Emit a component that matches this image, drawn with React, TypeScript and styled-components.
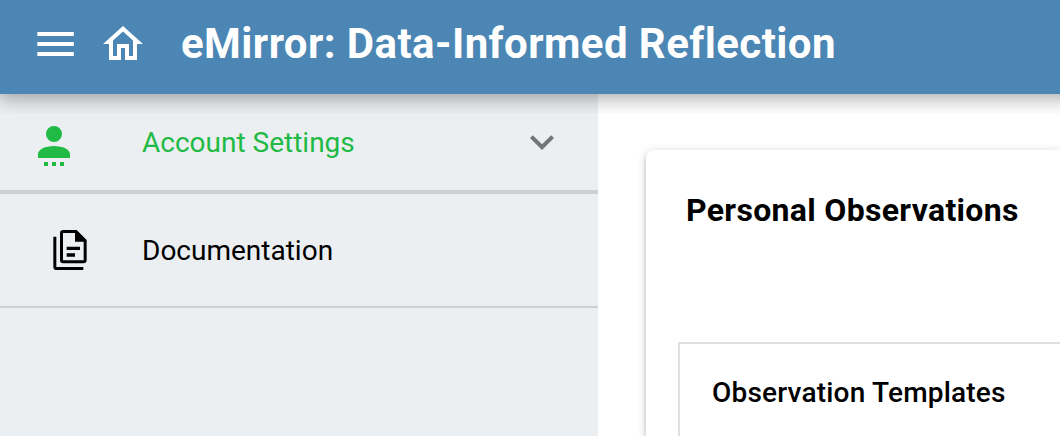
import React from "react";
import styled, { createGlobalStyle } from "styled-components";

const GlobalStyle = createGlobalStyle`
  *, *::before, *::after { box-sizing: border-box; }
  body {
    margin: 0;
    background: #fff;
    color: #000;
    font-family: Roboto, "Liberation Sans", sans-serif;
    font-size: 28px;
    line-height: 40px;
  }
  h1, h2, h3, ul { margin: 0; padding: 0; }
`;

const Page = styled.div`
  display: flex;
  flex-direction: column;
  min-height: 100vh;
  overflow-x: clip;
`;

const Header = styled.header`
  position: relative;
  z-index: 1;
  display: flex;
  align-items: center;
  margin-right: -24px;
  padding: 20px 31px 26px;
  background: #4b86b4;
  color: #fff;
  box-shadow: 0 0 20px 4px rgba(0, 0, 0, 0.2), 0 0 20px rgba(0, 0, 0, 0.24);
  clip-path: inset(0 0 -20px 0);
`;

const HeaderTools = styled.div`
  display: flex;
  gap: 20px;
`;

const IconButton = styled.button`
  display: flex;
  padding: 0;
  border: 0;
  background: none;
  color: inherit;
  cursor: pointer;
`;

const IconLink = styled.a`
  display: flex;
  color: inherit;
`;

const Icon = styled.svg<{ $width?: number; $height?: number }>`
  display: block;
  flex: none;
  width: ${({ $width = 48 }) => $width}px;
  height: ${({ $height = 48 }) => $height}px;
  fill: currentColor;
`;

const Title = styled.h1`
  margin-left: 34px;
  font-size: 42px;
  font-weight: 700;
  line-height: 48px;
  letter-spacing: 0.01em;
  white-space: nowrap;
`;

const Body = styled.div`
  display: flex;
  flex: 1;
`;

const Sidebar = styled.nav`
  flex: 0 0 598px;
  background: #ebeff2;
`;

const NavList = styled.ul`
  list-style: none;
`;

const NavItem = styled.li<{ $rule: number }>`
  border-bottom: ${({ $rule }) => $rule}px solid #cdd1d4;
`;

const SectionToggle = styled.button`
  display: flex;
  align-items: center;
  width: 100%;
  height: 96px;
  padding: 0 32px 0 30px;
  border: 0;
  background: none;
  color: #21ba45;
  font: inherit;
  text-align: left;
  cursor: pointer;
`;

const NavLink = styled.a`
  display: flex;
  align-items: center;
  height: 112px;
  padding: 0 32px 0 30px;
  color: #000;
  text-decoration: none;
`;

const NavIcon = styled.span<{ $inset?: number }>`
  display: flex;
  flex: 0 0 112px;
  padding-left: ${({ $inset = 0 }) => $inset}px;
`;

const NavLabel = styled.span`
  flex: 1;
  padding-top: 2px;
`;

const Chevron = styled.span`
  display: flex;
  color: #757575;
`;

const Main = styled.main`
  flex: 1;
  min-width: 0;
  display: flex;
  padding: 56px 0 0 48px;
  overflow: hidden;
`;

const Card = styled.section`
  flex: 1 0 auto;
  padding: 40px 0 0 32px;
  border-radius: 8px 0 0 0;
  background: #fff;
  box-shadow: 0 2px 10px rgba(0, 0, 0, 0.2), 0 4px 4px rgba(0, 0, 0, 0.14),
    0 6px 2px -4px rgba(0, 0, 0, 0.12);
`;

const CardTitle = styled.h2`
  margin: 0 0 112px 8px;
  font-size: 32px;
  font-weight: 700;
  line-height: 40px;
  letter-spacing: 0.01em;
`;

const Panel = styled.section`
  min-height: 94px;
  padding: 28px 32px 22px;
  border: 2px solid #e0e0e0;
  border-width: 2px 0 0 2px;
`;

const PanelTitle = styled.h3`
  font-size: 28px;
  font-weight: 500;
  line-height: 42px;
  letter-spacing: 0.00714em;
`;

export default function App() {
  return (
    <>
      <GlobalStyle />
      <Page>
        <Header>
          <HeaderTools>
            <IconButton type="button" aria-label="Menu">
              <Icon viewBox="0 0 24 24" aria-hidden="true">
                <path d="M3.15 6H21.4V8H3.15V6M3.15 11H21.4V13H3.15V11M3.15 16H21.4V18H3.15V16Z" />
              </Icon>
            </IconButton>
            <IconLink href="#home" aria-label="Home">
              <Icon viewBox="0 0 24 24" aria-hidden="true">
                <path d="M12 5.69L17 10.19V18H15V12H9V18H7V10.19L12 5.69M12 3L2 12H5V20H11V14H13V20H19V12H22L12 3Z" />
              </Icon>
            </IconLink>
          </HeaderTools>
          <Title>eMirror: Data-Informed Reflection</Title>
        </Header>
        <Body>
          <Sidebar aria-label="Main">
            <NavList>
              <NavItem $rule={4}>
                <SectionToggle type="button" aria-expanded="false">
                  <NavIcon>
                    <Icon viewBox="0 0 24 24" aria-hidden="true">
                      <path d="M12 4A4 4 0 0 1 12 12A4 4 0 0 1 12 4M12 14C16.42 14 20 15.79 20 18V20H4V18C4 15.79 7.58 14 12 14M7 22H9V24H7V22M11 22H13V24H11V22M15 22H17V24H15V22Z" />
                    </Icon>
                  </NavIcon>
                  <NavLabel>Account Settings</NavLabel>
                  <Chevron>
                    <Icon viewBox="0 0 24 24" aria-hidden="true">
                      <path d="M7.41 8.58L12 13.17L16.59 8.58L18 10L12 16L6 10L7.41 8.58Z" />
                    </Icon>
                  </Chevron>
                </SectionToggle>
              </NavItem>
              <NavItem $rule={2}>
                <NavLink href="#documentation">
                  <NavIcon $inset={20}>
                    <Icon viewBox="-2 0 24 24" $width={40} $height={40} aria-hidden="true">
                      <path
                        fillRule="evenodd"
                        d="M6 0H14L20 6V18A2 2 0 0 1 18 20H6A2 2 0 0 1 4 18V2A2 2 0 0 1 6 0ZM5.8 1.8V18.2H18.2V7H13V1.8ZM8 10H16V12H8ZM8 14H13V16H8ZM0 4H1.8V22.2H18V24H2A2 2 0 0 1 0 22Z"
                      />
                    </Icon>
                  </NavIcon>
                  <NavLabel>Documentation</NavLabel>
                </NavLink>
              </NavItem>
            </NavList>
          </Sidebar>
          <Main>
            <Card>
              <CardTitle>Personal Observations</CardTitle>
              <Panel>
                <PanelTitle>Observation Templates</PanelTitle>
              </Panel>
            </Card>
          </Main>
        </Body>
      </Page>
    </>
  );
}
